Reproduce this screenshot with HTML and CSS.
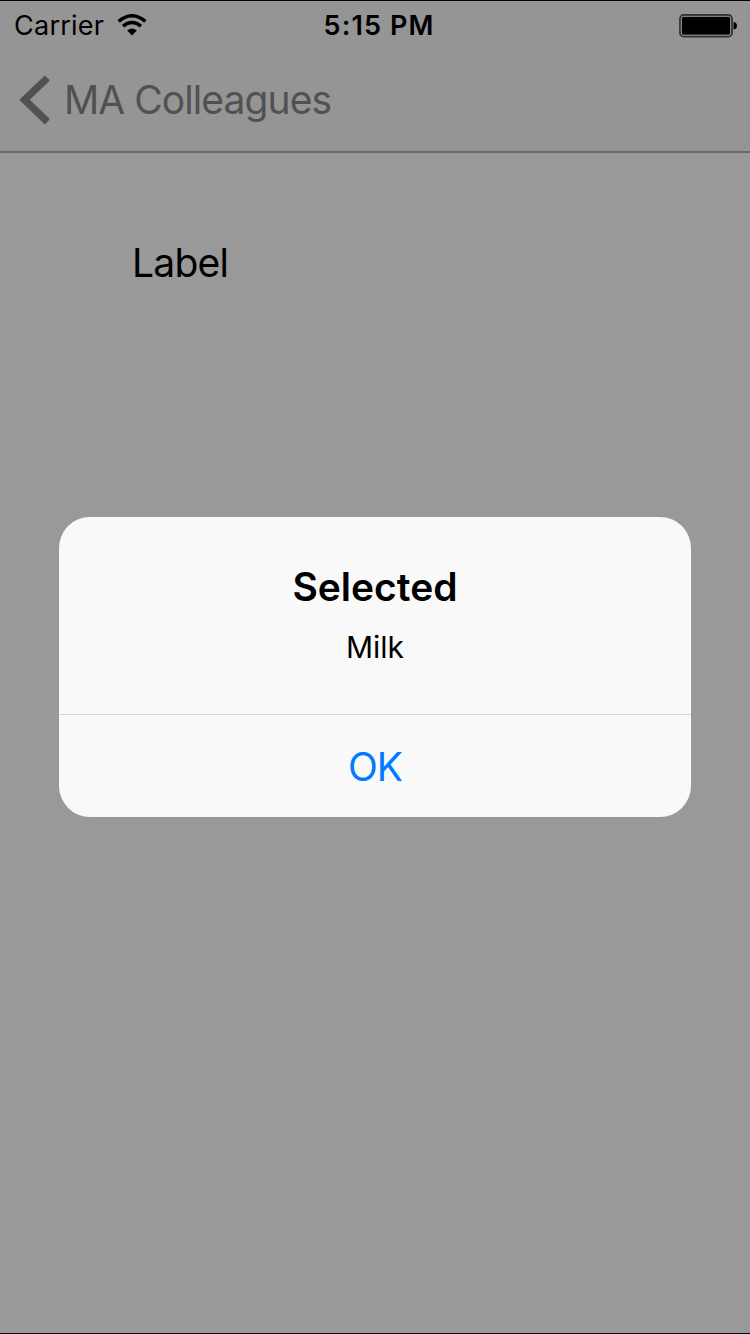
FILE: index.html
```html
<!DOCTYPE html>
<html lang="en">
<head>
<meta charset="utf-8">
<title>Selected</title>
<link rel="stylesheet" href="styles.css">
</head>
<body>
<div class="screen">
  <header class="header">
    <div class="status">
      <div class="status-left">
        <span class="carrier">Carrier</span>
        <svg class="wifi" width="30" height="22" viewBox="0 0 30 22" fill="none" stroke="#000">
          <path d="M1.6 7.4Q15 -3.8 28.4 7.4" stroke-width="3.5"/>
          <path d="M6 12.2Q15 5 24 12.2" stroke-width="3.4"/>
          <path d="M10.2 16.4Q15 12.4 19.8 16.4L15 21.4Z" fill="#000" stroke="none"/>
        </svg>
      </div>
      <span class="time">5:15 PM</span>
      <svg class="battery" width="58" height="24" viewBox="0 0 58 24">
        <rect x="1" y="1" width="52" height="21.5" rx="3.5" fill="none" stroke="#333" stroke-width="1.8"/>
        <rect x="2.6" y="2.6" width="48.8" height="18.3" rx="2" fill="#000"/>
        <rect x="2.4" y="2.4" width="49.2" height="18.7" rx="2" fill="none" stroke="#8a8a8a" stroke-width="1"/>
        <path d="M54.5 8C56.5 8 58 9.5 58 11.8S56.5 15.6 54.5 15.6Z" fill="#000"/>
      </svg>
    </div>
    <nav class="nav">
      <svg class="back" width="30" height="50" viewBox="0 0 30 50">
        <path d="M24.8 0.4L29.4 4.8V6L9.8 24.8L29.4 43.6V44.8L24.8 49.4L0 25.6V24Z" fill="#515151"/>
      </svg>
      <span class="back-text">MA Colleagues</span>
    </nav>
  </header>
  <main class="content"><span class="label">Label</span></main>
  <div class="overlay">
    <div class="alert" role="alertdialog">
      <div class="alert-body">
        <div class="alert-title">Selected</div>
        <div class="alert-message">Milk</div>
      </div>
      <div class="alert-action"><span class="ok">OK</span></div>
    </div>
  </div>
</div>
</body>
</html>
```
FILE: styles.css
```css
* { box-sizing: border-box; }
body { margin: 0; font-family: Inter, "Liberation Sans", sans-serif; color: #000; }
svg { display: block; flex: none; }
.screen { position: relative; width: 750px; height: 1334px; overflow: hidden; background: #999; border-top: 1px solid #000; border-bottom: 1px solid #000; }
.header { height: 152px; background: #959595; border-bottom: 2px solid #6a6a6a; }
.status { display: grid; grid-template-columns: 1fr auto 1fr; align-items: center; height: 49px; padding: 0 13px 0 14px; white-space: nowrap; }
.status-left { display: flex; align-items: center; gap: 13px; }
.carrier { font-size: 27px; letter-spacing: 0.25px; }
.wifi { margin-top: -2px; }
.time { font-size: 27px; font-weight: 600; letter-spacing: 1.1px; padding-left: 7px; }
.battery { justify-self: end; }
.nav { display: flex; align-items: center; height: 99px; padding-left: 20px; gap: 14px; }
.back-text { font-size: 39px; letter-spacing: -0.93px; color: #515151; white-space: nowrap; }
.content { padding: 80px 0 0 132px; }
.label { display: block; font-size: 39px; line-height: 60px; letter-spacing: -0.75px; }
.overlay { position: absolute; inset: 0; display: flex; align-items: center; justify-content: center; }
.alert { width: 632px; height: 300px; border-radius: 31px; background: #f9f9f9; text-align: center; overflow: hidden; }
.alert-body { height: 198px; padding-top: 46px; border-bottom: 1px solid #d4d4d4; }
.alert-title { font-size: 39px; font-weight: 600; line-height: 48px; }
.alert-message { margin-top: 16px; font-size: 30px; line-height: 40px; }
.alert-action { height: 102px; font-size: 39px; line-height: 104px; letter-spacing: -1px; color: #007aff; }
```
